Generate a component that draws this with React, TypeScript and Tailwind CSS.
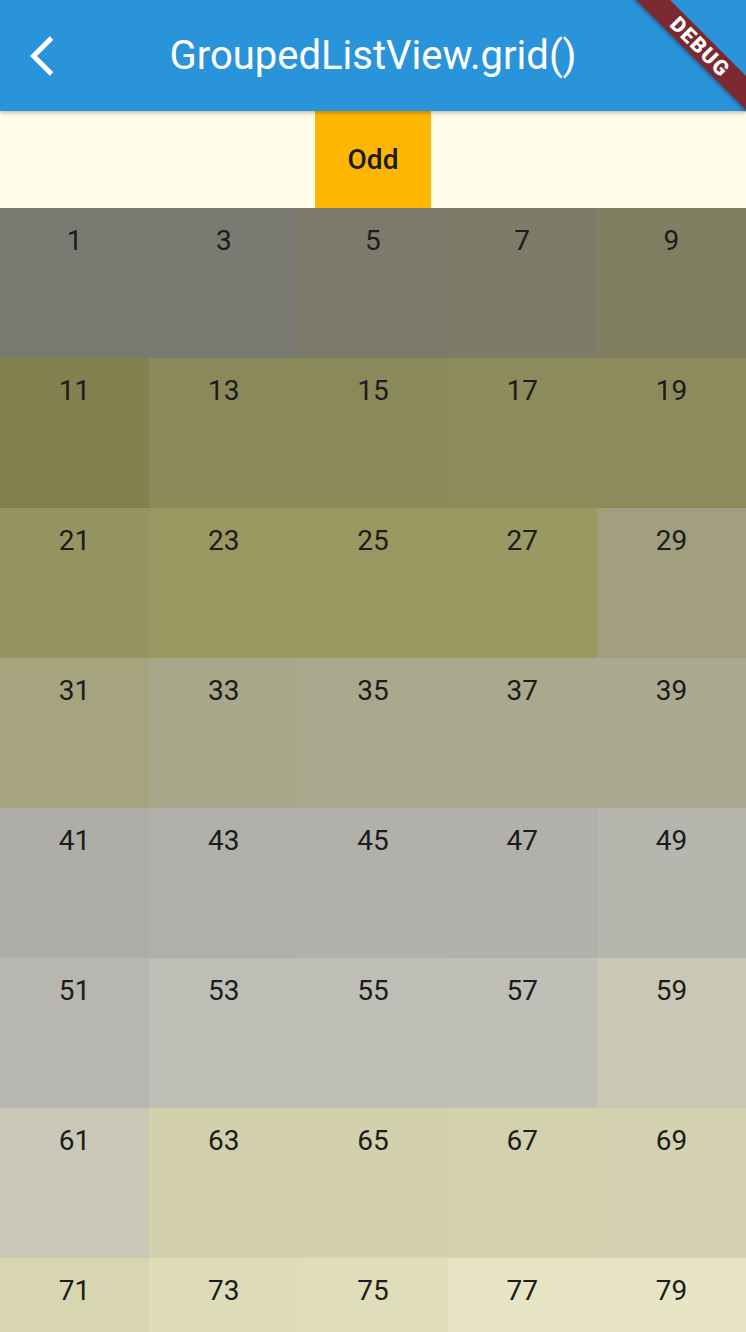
import React from 'react'

// odd numbers 1..79, each tile gets its own shade
const tiles: { n: number; bg: string }[] = [
  { n: 1, bg: '#7a7a72' }, { n: 3, bg: '#7a7a72' }, { n: 5, bg: '#7c7b6b' }, { n: 7, bg: '#7d7c69' }, { n: 9, bg: '#807f62' },
  { n: 11, bg: '#82814f' }, { n: 13, bg: '#8b895a' }, { n: 15, bg: '#8b895a' }, { n: 17, bg: '#8d8b5c' }, { n: 19, bg: '#8d8b5c' },
  { n: 21, bg: '#969460' }, { n: 23, bg: '#9a9860' }, { n: 25, bg: '#9a9860' }, { n: 27, bg: '#9b9962' }, { n: 29, bg: '#a19f80' },
  { n: 31, bg: '#a5a47f' }, { n: 33, bg: '#a8a789' }, { n: 35, bg: '#aaa98d' }, { n: 37, bg: '#aaa98e' }, { n: 39, bg: '#abaa90' },
  { n: 41, bg: '#aeada7' }, { n: 43, bg: '#b0afaa' }, { n: 45, bg: '#b1b0ab' }, { n: 47, bg: '#b1b0ab' }, { n: 49, bg: '#b7b6ae' },
  { n: 51, bg: '#b7b6b0' }, { n: 53, bg: '#bebdb6' }, { n: 55, bg: '#bebdb6' }, { n: 57, bg: '#bfbeb7' }, { n: 59, bg: '#cac8b4' },
  { n: 61, bg: '#c9c8b8' }, { n: 63, bg: '#d2d0ad' }, { n: 65, bg: '#d2d0ad' }, { n: 67, bg: '#d3d1ae' }, { n: 69, bg: '#d4d2b0' },
  { n: 71, bg: '#d8d6b0' }, { n: 73, bg: '#dedcb6' }, { n: 75, bg: '#dfddba' }, { n: 77, bg: '#e7e5c6' }, { n: 79, bg: '#e7e5c6' },
]

function BackIcon() {
  return (
    <svg width="48" height="48" viewBox="0 0 24 24" fill="white">
      <path d="M11.67 3.87L9.9 2.1 0 12l9.9 9.9 1.77-1.77L3.54 12z" />
    </svg>
  )
}

function DebugBanner() {
  return (
    <div className="pointer-events-none absolute top-0 right-0 z-20 h-[112px] w-[120px] overflow-hidden">
      <div className="absolute left-[-46px] top-[35px] flex h-[24px] w-[240px] rotate-45 items-center justify-center bg-[#7c2830] shadow-[0_2px_4px_rgba(0,0,0,0.3)]">
        <span className="text-[21px] font-black leading-none tracking-[1.5px] text-white">DEBUG</span>
      </div>
    </div>
  )
}

export default function App() {
  return (
    <div className="relative h-[1332px] w-[746px] overflow-hidden bg-[#fffdf0] font-['Roboto',sans-serif]">
      <header className="relative z-10 grid h-[111px] grid-cols-[1fr_auto_1fr] items-center bg-[#2a94da] shadow-[0_2px_4px_rgba(0,0,0,0.25)]">
        <div className="pl-[30px]">
          <BackIcon />
        </div>
        <h1 className="text-[40px] leading-none text-white">GroupedListView.grid()</h1>
        <div />
      </header>

      <div className="flex h-[97px] justify-center bg-[#fffde8]">
        <div className="flex w-[116px] items-center justify-center bg-[#ffb600]">
          <span className="text-[28px] font-medium text-[#1a1a1a]">Odd</span>
        </div>
      </div>

      <div className="grid grid-cols-5">
        {tiles.map((t) => (
          <div key={t.n} className="h-[150px] pt-[12px] text-center" style={{ backgroundColor: t.bg }}>
            <span className="text-[28px] text-[#1c1c1c]">{t.n}</span>
          </div>
        ))}
      </div>

      <DebugBanner />
    </div>
  )
}
